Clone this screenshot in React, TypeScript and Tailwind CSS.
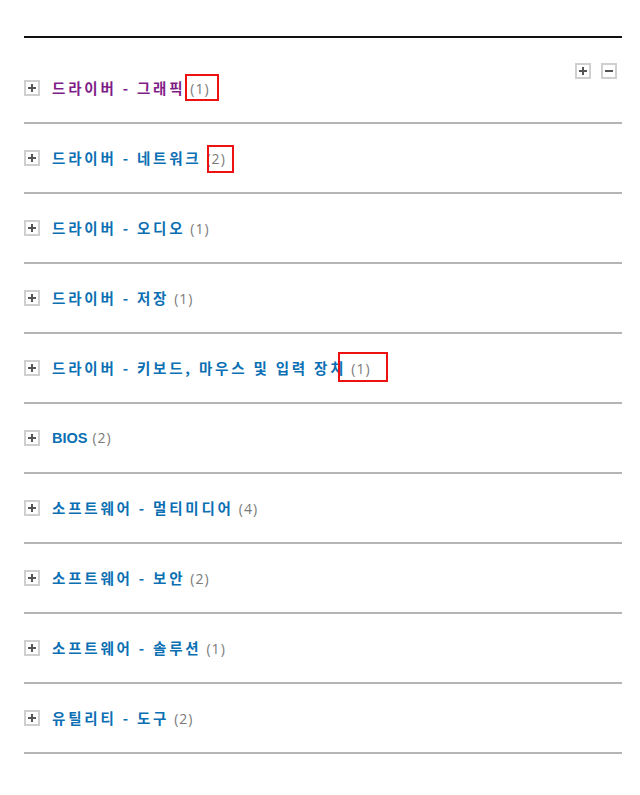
import React from 'react'

const rows = [
  { title: '드라이버 - 그래픽', count: 1, visited: true },
  { title: '드라이버 - 네트워크', count: 2 },
  { title: '드라이버 - 오디오', count: 1 },
  { title: '드라이버 - 저장', count: 1 },
  { title: '드라이버 - 키보드, 마우스 및 입력 장치', count: 1 },
  { title: 'BIOS', count: 2, latin: true },
  { title: '소프트웨어 - 멀티미디어', count: 4 },
  { title: '소프트웨어 - 보안', count: 2 },
  { title: '소프트웨어 - 솔루션', count: 1 },
  { title: '유틸리티 - 도구', count: 2 },
]

function PlusBox({ minus = false }: { minus?: boolean }) {
  return (
    <span className="w-4 h-4 shrink-0 border-2 border-[#cfcfcf] bg-white flex items-center justify-center">
      <svg width="10" height="10" viewBox="0 0 10 10">
        <rect x="1" y="4" width="8" height="2" fill="#555" />
        {!minus && <rect x="4" y="1" width="2" height="8" fill="#555" />}
      </svg>
    </span>
  )
}

export default function App() {
  return (
    <div className="bg-white w-[640px] h-[795px] pt-[36px] relative">
      <div className="ml-6 mr-[18px] border-t-2 border-[#111] relative">
        {/* 전체 펼치기 / 접기 */}
        <div className="absolute right-[5px] top-[25px] flex gap-[10px]">
          <PlusBox />
          <PlusBox minus />
        </div>
        <div className="pt-4">
          {rows.map((r) => (
            <div
              key={r.title}
              className="h-[70px] flex items-center gap-3 border-b-2 border-[#b4b4b4]"
            >
              <PlusBox />
              <span className="flex items-baseline gap-[5px]">
                <span
                  className={
                    (r.latin
                      ? 'text-[14.5px] font-bold tracking-normal '
                      : 'text-[14.5px] font-semibold tracking-[2.8px] ') +
                    (r.visited ? 'text-[#7f1d86]' : 'text-[#0b6fb3]')
                  }
                  style={{
                    fontFamily: r.latin
                      ? '"Liberation Sans", Arial, sans-serif'
                      : '"Noto Sans CJK KR", "Noto Sans", sans-serif',
                  }}
                >
                  {r.title}
                </span>
                <span
                  className="font-normal text-[#7a7a7a] tracking-[1px] text-[14px]"
                  style={{ fontFamily: '"Open Sans", "Liberation Sans", sans-serif' }}
                >
                  ({r.count})
                </span>
              </span>
            </div>
          ))}
        </div>
      </div>

      {/* 빨간 표시 박스 */}
      <div className="absolute left-[185px] top-[74px] w-[34px] h-[27px] border-2 border-[#ee1111]" />
      <div className="absolute left-[207px] top-[145px] w-[27px] h-[28px] border-2 border-[#ee1111]" />
      <div className="absolute left-[338px] top-[352px] w-[50px] h-[30px] border-2 border-[#ee1111]" />
    </div>
  )
}
